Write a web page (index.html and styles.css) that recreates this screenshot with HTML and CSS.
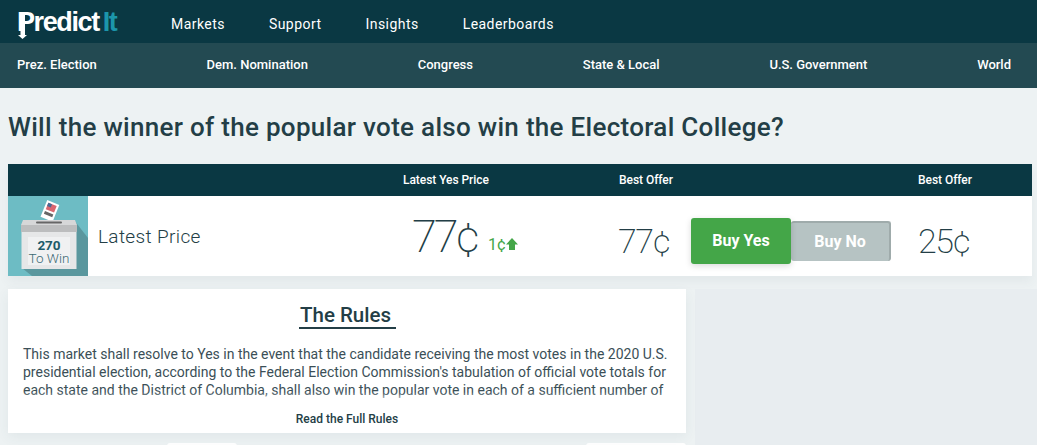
FILE: index.html
```html
<!DOCTYPE html>
<html lang="en">
<head>
<meta charset="utf-8">
<title>PredictIt</title>
<link rel="stylesheet" href="styles.css">
</head>
<body>
<header class="topbar">
  <a class="logo">
    <span class="logo-predict">Predict</span><span class="logo-it">It</span>
    <svg class="logo-arrow" viewBox="0 0 9 26" width="9" height="26"><path d="M2.500 2Q4 0 7 0V22H9L4.500 26L0 22H2.500Z" fill="#fff"/></svg>
  </a>
  <nav class="mainnav">
    <a>Markets</a><a>Support</a><a>Insights</a><a>Leaderboards</a>
  </nav>
</header>
<nav class="subnav">
  <a>Prez. Election</a><a>Dem. Nomination</a><a>Congress</a><a>State &amp; Local</a><a>U.S. Government</a><a>World</a>
</nav>
<main class="page">
  <h1 class="title">Will the winner of the popular vote also win the Electoral College?</h1>
  <section class="market">
    <div class="market-head">
      <span class="head-yes">Latest Yes Price</span>
      <span class="head-offer">Best Offer</span>
      <span class="head-offer2">Best Offer</span>
    </div>
    <div class="market-row">
      <svg class="ballot" viewBox="0 0 80 80" width="80" height="80">
        <rect width="80" height="80" fill="#6dbcc4"/>
        <path d="M66 24L80 42V80H24L14 72Z" fill="#5a979e"/>
        <g transform="rotate(22 42 16)">
          <rect x="35" y="6" width="13" height="18" fill="#fff"/>
          <rect x="37" y="8" width="9" height="7" fill="#d9666f"/>
          <rect x="37" y="8" width="4" height="3.500" fill="#4a6a94"/>
          <rect x="37" y="17" width="9" height="3" fill="#666"/>
        </g>
        <rect x="13" y="29" width="56" height="7" fill="#bcbdbe"/>
        <path d="M15 24H67L69 29H13Z" fill="#d6d7d8"/>
        <rect x="28" y="25.500" width="26" height="2" rx="1" fill="#666"/>
        <rect x="13.500" y="36" width="55" height="37" fill="#e6e7e8"/>
        <rect x="20" y="41" width="42" height="28" fill="#f0f1f2"/>
        <text x="41" y="53.500" class="ballot-num" text-anchor="middle">270</text>
        <text x="41" y="67" class="ballot-win" text-anchor="middle">To Win</text>
      </svg>
      <span class="row-label">Latest Price</span>
      <span class="price-big">77¢</span>
      <span class="change">1¢<svg viewBox="0 0 12 12" width="12" height="12"><path d="M6 0L12 6.500H9V12H3V6.500H0Z" fill="#44a648"/></svg></span>
      <span class="price-mid offer-yes">77¢</span>
      <button class="buy buy-yes">Buy Yes</button>
      <button class="buy buy-no">Buy No</button>
      <span class="price-mid offer-no">25¢</span>
    </div>
  </section>
  <div class="lower">
    <section class="rules">
      <h2 class="rules-title"><span>The Rules</span></h2>
      <p class="rules-text">This market shall resolve to Yes in the event that the candidate receiving the most votes in the 2020 U.S. presidential election, according to the Federal Election Commission's tabulation of official vote totals for each state and the District of Columbia, shall also win the popular vote in each of a sufficient number of</p>
      <a class="rules-more">Read the Full Rules</a>
    </section>
    <aside class="side-panel"></aside>
    <div class="tabs">
      <span class="tab tab-a"></span>
      <span class="tab tab-b"></span>
    </div>
  </div>
</main>
</body>
</html>
```
FILE: styles.css
```css
* { box-sizing: border-box; }
html, body { height: 445px; overflow: hidden; }
body {
  margin: 0;
  background: #edf2f3;
  font-family: Roboto, "Liberation Sans", sans-serif;
  color: #233e46;
}
.topbar {
  height: 43px;
  background: #0a3843;
  display: flex;
  align-items: center;
  color: #fff;
}
.logo {
  width: 171px;
  padding-left: 17px;
  display: flex;
  align-items: center;
  position: relative;
  font-family: "Liberation Sans", sans-serif;
  font-weight: 700;
  font-size: 27px;
  letter-spacing: -1.4px;
  line-height: 30px;
}
.logo-arrow { position: absolute; left: 18px; top: 6px; }
.logo-predict { color: #fff; }
.logo-it { margin-left: 4px; color: #1c96ab; }
.mainnav { display: flex; gap: 44px; font-size: 14px; letter-spacing: 0.45px; padding-top: 5px; }
.subnav {
  height: 45px;
  background: #234a52;
  display: flex;
  align-items: center;
  justify-content: space-between;
  padding: 0 26px 2px 17px;
  color: #fff;
  font-size: 13px;
  font-weight: 500;
}
.page { padding: 0 5px 0 8px; height: 357px; }
.title {
  margin: 0;
  padding-top: 22px;
  height: 76px;
  font-size: 26px;
  line-height: 34px;
  font-weight: 500;
  letter-spacing: 0.3px;
  color: #233e46;
}
.market { box-shadow: 0 6px 10px rgba(60,80,100,.06); }
.market-head {
  height: 32px;
  background: #0a3843;
  color: #fff;
  font-size: 12px;
  font-weight: 500;
  letter-spacing: -0.05px;
  display: grid;
  grid-template-columns: 395px 216px 299px auto;
  align-items: center;
  padding-bottom: 1px;
}
.head-yes { grid-column: 2; }
.head-offer { grid-column: 3; }
.head-offer2 { grid-column: 4; }
.market-row {
  height: 80px;
  background: #fff;
  display: flex;
  align-items: center;
}
.ballot { flex: none; }
.ballot-num { font: 700 13.500px Roboto, sans-serif; fill: #1d5a68; }
.ballot-win { font: 300 13.500px Roboto, sans-serif; fill: #3d6a75; }
.row-label { width: 324px; padding-left: 10px; font-size: 19px; font-weight: 300; letter-spacing: 0.35px; flex: none; }
.price-big { font-size: 45px; font-weight: 200; letter-spacing: -3px; width: 76px; flex: none; color: #233e46; }
.change { display: flex; align-items: center; color: #44a648; font-size: 16px; width: 130px; flex: none; margin-top: 16px; }
.price-mid { font-size: 34px; font-weight: 200; letter-spacing: -1.500px; flex: none; margin-top: 9px; color: #233e46; }
.offer-yes { width: 73px; }
.buy {
  border: 0;
  padding: 0 0 2px;
  font: 700 16px Roboto, sans-serif;
  color: #fff;
  flex: none;
  margin-top: 10px;
}
.buy-yes {
  width: 100px;
  height: 46px;
  background: #44a648;
  border-radius: 3px;
  box-shadow: 0 2px 6px rgba(0,0,0,.15);
  position: relative;
}
.buy-no {
  width: 100px;
  height: 40px;
  background: #b6c3c3;
  border-radius: 3px;
  border-top: 2px solid #9fabab;
  border-right: 2px solid #9fabab;
}
.offer-no { margin-left: 27px; }
.lower {
  margin-top: 13px;
  display: grid;
  grid-template-columns: 678px 342px;
  column-gap: 9px;
  grid-template-rows: 144px auto;
}
.rules {
  height: 144px;
  background: #fff;
  box-shadow: 0 4px 12px rgba(60,80,100,.07);
  padding: 0 15px;
  position: relative;
}
.side-panel { background: #e8edf0; grid-row: 1 / 3; grid-column: 2; height: 160px; }
.rules-title { margin: 0; padding-top: 14px; height: 57px; text-align: center; font-size: 20.500px; font-weight: 500; line-height: 25px; }
.rules-title span { display: inline-block; margin-left: 1px; padding-left: 1px; text-align: left; border-bottom: 2px solid #233e46; height: 26px; width: 97px; white-space: nowrap; }
.rules-text { margin: -1px 0 0; font-size: 14px; line-height: 18px; height: 54px; color: #3b4f57; }
.rules-more {
  position: absolute;
  left: 0;
  right: 0;
  bottom: 0;
  height: 41px;
  text-align: center;
  font-size: 12px;
  font-weight: 500;
  line-height: 16px;
  padding-top: 19px;
  color: #233e46;
  background: linear-gradient(rgba(255,255,255,0), #fff 12px);
}
.tabs { grid-column: 1; display: flex; height: 2px; margin-top: 10px; }
.tab { background: #fff; height: 4px; border-radius: 3px 3px 0 0; }
.tab-a { width: 70px; margin-left: 159px; }
.tab-b { width: 100px; margin-left: 349px; }
```
